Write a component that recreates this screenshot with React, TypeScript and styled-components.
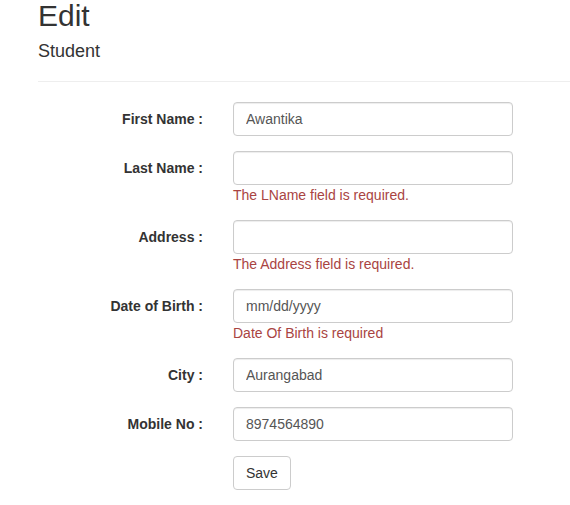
import React from 'react'
import styled, { createGlobalStyle } from 'styled-components'

const GlobalStyle = createGlobalStyle`
    * {
        box-sizing: border-box;
    }
    body {
        margin: 0;
        background: #fff;
        font-family: "Liberation Sans", Arial, Helvetica, sans-serif;
        font-size: 14px;
        line-height: 1.42857;
        color: #333;
    }
`

const Page = styled.div`
    padding-left: 38px;
    overflow: hidden;
`

const Title = styled.h2`
    font-size: 30px;
    font-weight: 500;
    line-height: 1.1;
    margin: -1px 0 10px;
`

const SubTitle = styled.h4`
    font-size: 18px;
    font-weight: 500;
    line-height: 1.1;
    margin: 0 0 -1px;
`

const Divider = styled.hr`
    margin: 20px 0;
    border: 0;
    border-top: 1px solid #eee;
`

const Form = styled.form`
    display: flex;
    flex-direction: column;
    gap: 15px;
`

const FormRow = styled.div`
    display: flex;
    gap: 30px;
`

const Label = styled.label`
    width: 165px;
    padding-top: 8px;
    text-align: right;
    font-weight: 700;
    color: #333;
`

const Field = styled.div`
    width: 280px;
    display: flex;
    flex-direction: column;
`

const Input = styled.input`
    height: 34px;
    width: 100%;
    padding: 6px 12px;
    font-family: inherit;
    font-size: 14px;
    line-height: 1.42857;
    color: #555;
    background: #fff;
    border: 1px solid #ccc;
    border-radius: 4px;
    box-shadow: inset 0 1px 1px rgba(0, 0, 0, 0.075);
    outline: none;
`

const ErrorText = styled.span`
    color: #a94442;
    padding-top: 1px;
    margin-bottom: -1px;
`

const Button = styled.button`
    align-self: flex-start;
    height: 34px;
    padding: 7px 12px 5px;
    font-family: inherit;
    font-size: 14px;
    line-height: 1.42857;
    color: #333;
    background: #fff;
    border: 1px solid #ccc;
    border-radius: 4px;
    cursor: pointer;
`

type FieldDef = {
    label: string
    value: string
    error?: string
}

const fields: FieldDef[] = [
    { label: 'First Name :', value: 'Awantika' },
    { label: 'Last Name :', value: '', error: 'The LName field is required.' },
    { label: 'Address :', value: '', error: 'The Address field is required.' },
    { label: 'Date of Birth :', value: 'mm/dd/yyyy', error: 'Date Of Birth is required' },
    { label: 'City :', value: 'Aurangabad' },
    { label: 'Mobile No :', value: '8974564890' },
]

export default function App() {
    return (
        <>
            <GlobalStyle />
            <Page>
                <Title>Edit</Title>
                <SubTitle>Student</SubTitle>
                <Divider />
                <Form onSubmit={(e) => e.preventDefault()}>
                    {fields.map((f) => (
                        <FormRow key={f.label}>
                            <Label>{f.label}</Label>
                            <Field>
                                <Input type="text" defaultValue={f.value} />
                                {f.error && <ErrorText>{f.error}</ErrorText>}
                            </Field>
                        </FormRow>
                    ))}
                    <FormRow>
                        <Label />
                        <Field>
                            <Button type="submit">Save</Button>
                        </Field>
                    </FormRow>
                </Form>
            </Page>
        </>
    )
}
